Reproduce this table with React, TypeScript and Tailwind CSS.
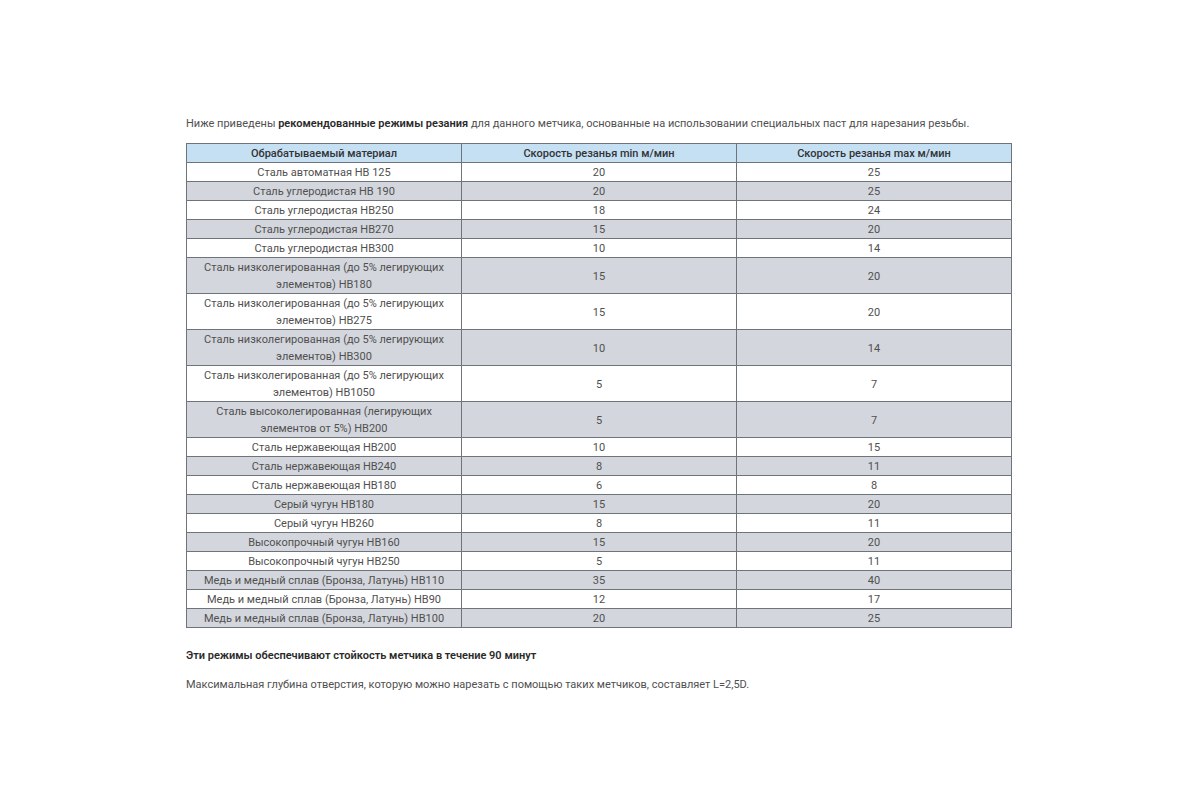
const ROWS: [string, string, string][] = [
  ["Сталь автоматная НВ 125", "20", "25"],
  ["Сталь углеродистая НВ 190", "20", "25"],
  ["Сталь углеродистая НВ250", "18", "24"],
  ["Сталь углеродистая НВ270", "15", "20"],
  ["Сталь углеродистая НВ300", "10", "14"],
  ["Сталь низколегированная (до 5% легирующих элементов) НВ180", "15", "20"],
  ["Сталь низколегированная (до 5% легирующих элементов) НВ275", "15", "20"],
  ["Сталь низколегированная (до 5% легирующих элементов) НВ300", "10", "14"],
  ["Сталь низколегированная (до 5% легирующих элементов) НВ1050", "5", "7"],
  ["Сталь высоколегированная (легирующих элементов от 5%) НВ200", "5", "7"],
  ["Сталь нержавеющая НВ200", "10", "15"],
  ["Сталь нержавеющая НВ240", "8", "11"],
  ["Сталь нержавеющая НВ180", "6", "8"],
  ["Серый чугун НВ180", "15", "20"],
  ["Серый чугун НВ260", "8", "11"],
  ["Высокопрочный чугун НВ160", "15", "20"],
  ["Высокопрочный чугун НВ250", "5", "11"],
  ["Медь и медный сплав (Бронза, Латунь) НВ110", "35", "40"],
  ["Медь и медный сплав (Бронза, Латунь) НВ90", "12", "17"],
  ["Медь и медный сплав (Бронза, Латунь) НВ100", "20", "25"],
];

export default function App() {
  return (
    <div className="min-h-[800px] w-[1200px] bg-white font-['Roboto',sans-serif] text-[11px] leading-[17px] text-[#505050]">
      <div className="ml-[186px] w-[826px] pt-[115px]">
        <p>
          Ниже приведены{" "}
          <strong className="font-semibold text-[#2a2a2a]">рекомендованные режимы резания</strong> для
          данного метчика, основанные на использовании специальных паст для нарезания резьбы.
        </p>

        <table className="mt-[11px] w-full table-fixed border-collapse border border-[#6f747a] text-center">
          <thead>
            <tr className="bg-[#c6e0f3] text-[#333]">
              <th className="border border-[#6f747a] pt-px font-medium">Обрабатываемый материал</th>
              <th className="border border-[#6f747a] pt-px font-medium">Скорость резанья min м/мин</th>
              <th className="border border-[#6f747a] pt-px font-medium">Скорость резанья max м/мин</th>
            </tr>
          </thead>
          <tbody>
            {ROWS.map(([name, min, max], i) => (
              <tr key={i} className={i % 2 === 1 ? "bg-[#d3d6dc]" : "bg-white"}>
                <td className="border border-[#6f747a] px-4 pt-px">{name}</td>
                <td className="border border-[#6f747a] pt-px">{min}</td>
                <td className="border border-[#6f747a] pt-px">{max}</td>
              </tr>
            ))}
          </tbody>
        </table>

        <p className="mt-[19px] font-semibold text-[#2a2a2a]">
          Эти режимы обеспечивают стойкость метчика в течение 90 минут
        </p>
        <p className="mt-[12px]">
          Максимальная глубина отверстия, которую можно нарезать с помощью таких метчиков, составляет L=2,5D.
        </p>
      </div>
    </div>
  );
}
